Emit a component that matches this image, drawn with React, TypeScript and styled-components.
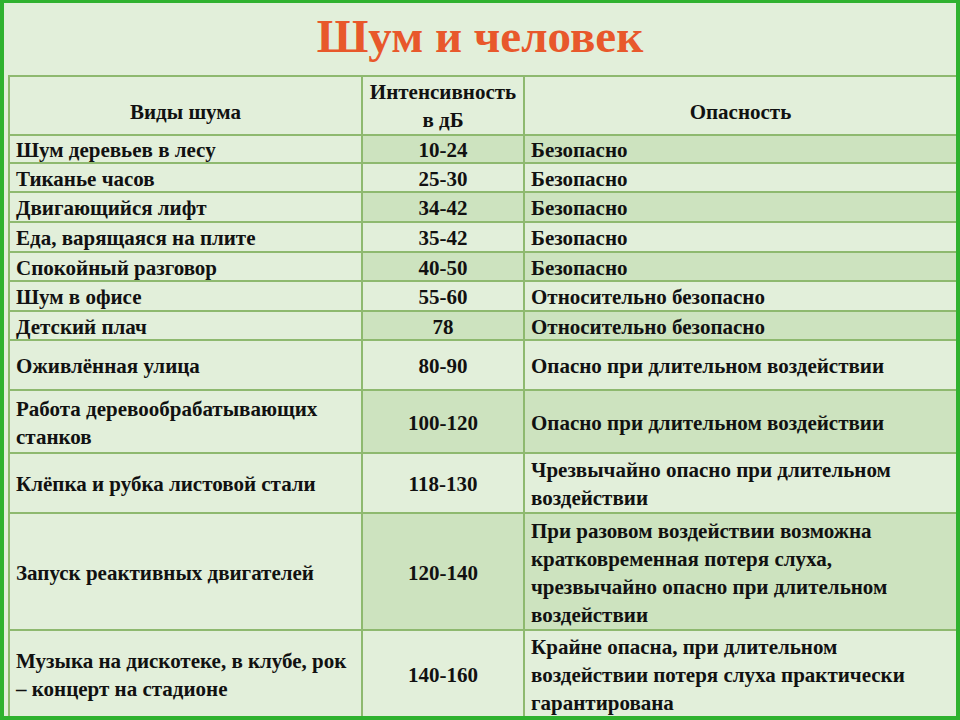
import React from 'react';
import styled, { createGlobalStyle } from 'styled-components';

const GlobalStyle = createGlobalStyle`
  html, body {
    margin: 0;
    padding: 0;
    background: #e2efda;
  }
`;

type Row = {
  name: React.ReactNode;
  db: string;
  danger: React.ReactNode;
  h: number;
  multi?: boolean;
};

const rows: Row[] = [
  { name: 'Шум деревьев в лесу', db: '10-24', danger: 'Безопасно', h: 28 },
  { name: 'Тиканье часов', db: '25-30', danger: 'Безопасно', h: 29 },
  { name: 'Двигающийся лифт', db: '34-42', danger: 'Безопасно', h: 30 },
  { name: 'Еда, варящаяся на плите', db: '35-42', danger: 'Безопасно', h: 30 },
  { name: 'Спокойный разговор', db: '40-50', danger: 'Безопасно', h: 29 },
  { name: 'Шум в офисе', db: '55-60', danger: 'Относительно безопасно', h: 30 },
  { name: 'Детский плач', db: '78', danger: 'Относительно безопасно', h: 29 },
  { name: 'Оживлённая улица', db: '80-90', danger: 'Опасно при длительном воздействии', h: 50 },
  {
    name: <>Работа деревообрабатывающих<br />станков</>,
    db: '100-120',
    danger: 'Опасно при длительном воздействии',
    h: 63,
    multi: true,
  },
  {
    name: 'Клёпка и рубка листовой стали',
    db: '118-130',
    danger: <>Чрезвычайно опасно при длительном<br />воздействии</>,
    h: 60,
    multi: true,
  },
  {
    name: 'Запуск реактивных двигателей',
    db: '120-140',
    danger: (
      <>
        При разовом воздействии возможна<br />
        кратковременная потеря слуха,<br />
        чрезвычайно опасно при длительном<br />
        воздействии
      </>
    ),
    h: 117,
    multi: true,
  },
  {
    name: <>Музыка на дискотеке, в клубе, рок<br />– концерт на стадионе</>,
    db: '140-160',
    danger: (
      <>
        Крайне опасна, при длительном<br />
        воздействии потеря слуха практически<br />
        гарантирована
      </>
    ),
    h: 88,
    multi: true,
  },
];

export default function App() {
  return (
    <>
      <GlobalStyle />
      <Frame>
        <Title>Шум и человек</Title>
        <Table>
          <colgroup>
            <col style={{ width: 353 }} />
            <col style={{ width: 162 }} />
            <col style={{ width: 433 }} />
          </colgroup>
          <thead>
            <HeadRow>
              <HeadCell>Виды шума</HeadCell>
              <HeadCell $twoLine>
                Интенсивность
                <br />в дБ
              </HeadCell>
              <HeadCell>Опасность</HeadCell>
            </HeadRow>
          </thead>
          <tbody>
            {rows.map((r, i) => (
              <BodyRow key={i} $h={r.h} $multi={!!r.multi}>
                <NameCell>{r.name}</NameCell>
                <DbCell $band={i % 2 === 0}>{r.db}</DbCell>
                <DangerCell $band={i % 2 === 0}>{r.danger}</DangerCell>
              </BodyRow>
            ))}
          </tbody>
        </Table>
      </Frame>
    </>
  );
}

const Frame = styled.div`
  box-sizing: border-box;
  width: 960px;
  height: 720px;
  overflow: hidden;
  background: #e2efda;
  border: 4px solid #2fb22f;
  border-top-width: 3px;
  padding-left: 4px;
  font-family: 'Liberation Serif', 'Times New Roman', serif;
  font-weight: bold;
  color: #111;
`;

const Title = styled.h1`
  margin: 0;
  height: 72px;
  line-height: 66px;
  padding-right: 4px;
  text-align: center;
  font-size: 47px;
  font-weight: bold;
  color: #e8582b;
`;

const Table = styled.table`
  width: 950px;
  table-layout: fixed;
  border-collapse: collapse;
  font-size: 21px;
  line-height: 28px;

  td,
  th {
    border: 2px solid #8eb96f;
    padding: 0 6px;
  }
`;

const HeadRow = styled.tr`
  height: 59px;
`;

const HeadCell = styled.th<{ $twoLine?: boolean }>`
  text-align: center;
  vertical-align: middle;
  font-weight: bold;
  padding-top: ${(p) => (p.$twoLine ? '0' : '12px')} !important;
`;

const BodyRow = styled.tr<{ $h: number; $multi: boolean }>`
  height: ${(p) => p.$h}px;
  line-height: ${(p) => (p.$multi ? '28px' : '24px')};
`;

const NameCell = styled.td`
  text-align: left;
  vertical-align: middle;
  white-space: nowrap;
  padding-top: 2px !important;
`;

const DbCell = styled.td<{ $band: boolean }>`
  text-align: center;
  vertical-align: middle;
  white-space: nowrap;
  padding-top: 2px !important;
  background: ${(p) => (p.$band ? '#cde3bf' : 'transparent')};
`;

const DangerCell = styled.td<{ $band: boolean }>`
  text-align: left;
  vertical-align: middle;
  white-space: nowrap;
  padding-top: 2px !important;
  background: ${(p) => (p.$band ? '#cde3bf' : 'transparent')};
`;
